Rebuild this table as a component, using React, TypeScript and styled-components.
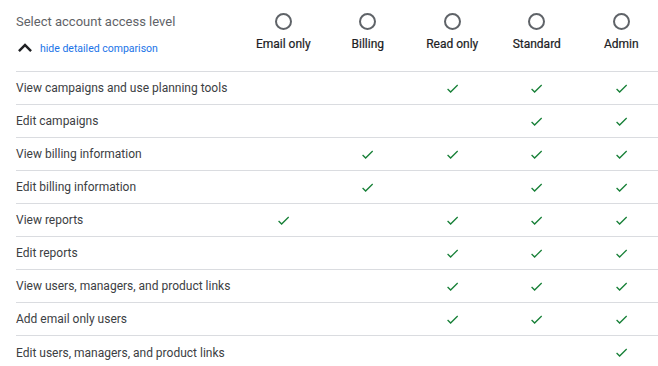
import styled, { createGlobalStyle } from 'styled-components'

const GlobalStyle = createGlobalStyle`
  html, body {
    margin: 0;
    padding: 0;
    background: #ffffff;
    overflow: hidden;
  }
  body {
    font-family: Roboto, 'Noto Sans', Arial, sans-serif;
    -webkit-font-smoothing: antialiased;
  }
`

const levels = ['Email only', 'Billing', 'Read only', 'Standard', 'Admin']

// which levels (by index) grant each permission
const permissions: { label: string; grants: number[] }[] = [
  { label: 'View campaigns and use planning tools', grants: [2, 3, 4] },
  { label: 'Edit campaigns', grants: [3, 4] },
  { label: 'View billing information', grants: [1, 2, 3, 4] },
  { label: 'Edit billing information', grants: [1, 3, 4] },
  { label: 'View reports', grants: [0, 2, 3, 4] },
  { label: 'Edit reports', grants: [2, 3, 4] },
  { label: 'View users, managers, and product links', grants: [2, 3, 4] },
  { label: 'Add email only users', grants: [2, 3, 4] },
  { label: 'Edit users, managers, and product links', grants: [4] },
]

const Page = styled.div`
  padding-left: 16px;
  width: 648px;
`

const Grid = styled.div`
  display: grid;
  grid-template-columns: 225px repeat(5, 84.5px);
`

const HeaderTitle = styled.div`
  display: flex;
  flex-direction: column;
  height: 72px;
  border-bottom: 1px solid #dadce0;
  padding-top: 13px;
  box-sizing: border-box;
`

const Title = styled.div`
  font-size: 13px;
  line-height: 18px;
  color: #5f6368;
`

const Toggle = styled.button`
  display: flex;
  align-items: center;
  gap: 2px;
  margin: 4px 0 0 -4px;
  padding: 0;
  border: none;
  background: none;
  cursor: pointer;
  font-family: inherit;
  font-size: 10.5px;
  color: #1a73e8;
`

const LevelHead = styled.div`
  display: flex;
  flex-direction: column;
  align-items: center;
  height: 72px;
  border-bottom: 1px solid #dadce0;
  padding-top: 13px;
  box-sizing: border-box;
`

const Radio = styled.span`
  width: 17px;
  height: 17px;
  border: 2px solid #5f6368;
  border-radius: 50%;
  box-sizing: border-box;
`

const LevelName = styled.span`
  margin-top: 7px;
  font-size: 12px;
  color: #202124;
  white-space: nowrap;
  -webkit-text-stroke: 0.2px #202124;
`

const Cell = styled.div<{ $last?: boolean; $center?: boolean }>`
  height: 33px;
  display: flex;
  align-items: center;
  justify-content: ${(p) => (p.$center ? 'center' : 'flex-start')};
  border-bottom: ${(p) => (p.$last ? 'none' : '1px solid #dadce0')};
  box-sizing: border-box;
  font-size: 12px;
  color: #3c4043;
  white-space: nowrap;
`

const Check = () => (
  <svg width='15' height='15' viewBox='0 0 24 24' fill='#188038'>
    <path d='M9 16.17L4.83 12l-1.42 1.41L9 19 21 7l-1.41-1.41z' />
  </svg>
)

const ChevronUp = () => (
  <svg width='26' height='26' viewBox='0 0 24 24' fill='#202124'>
    <path d='M12 7.6l-6.4 6.4 1.6 1.6L12 10.8l4.8 4.8 1.6-1.6z' />
  </svg>
)

export default function App() {
  return (
    <Page>
      <GlobalStyle />
      <Grid>
        <HeaderTitle>
          <Title>Select account access level</Title>
          <Toggle>
            <ChevronUp />
            hide detailed comparison
          </Toggle>
        </HeaderTitle>
        {levels.map((level) => (
          <LevelHead key={level}>
            <Radio />
            <LevelName>{level}</LevelName>
          </LevelHead>
        ))}
        {permissions.map((perm, row) => {
          const last = row === permissions.length - 1
          return [
            <Cell key={perm.label} $last={last}>
              {perm.label}
            </Cell>,
            ...levels.map((level, i) => (
              <Cell key={perm.label + level} $last={last} $center>
                {perm.grants.includes(i) && <Check />}
              </Cell>
            )),
          ]
        })}
      </Grid>
    </Page>
  )
}
